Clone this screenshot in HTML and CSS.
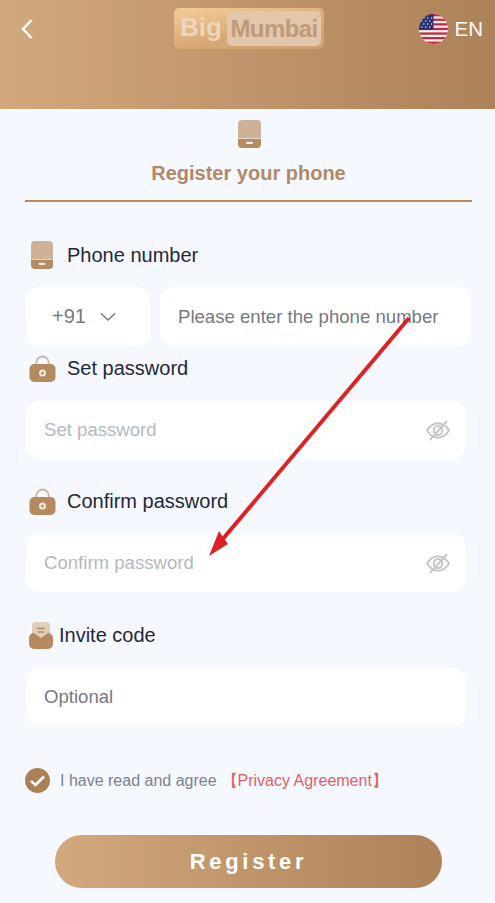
FILE: index.html
```html
<!DOCTYPE html>
<html lang="en">
<head>
<meta charset="utf-8">
<title>Register</title>
<link rel="stylesheet" href="styles.css">
</head>
<body>
<div class="page">
  <header class="header">
    <svg class="back" width="14" height="22" viewBox="0 0 14 22"><path d="M11.500 2 3 11l8.500 9" fill="none" stroke="#fff" stroke-width="2.400"/></svg>
    <div class="logo">
      <span class="logo-big">Big</span>
      <span class="logo-mumbai">Mumbai</span>
    </div>
    <div class="lang">
      <svg class="flag" width="29" height="30" viewBox="0 0 30 30" preserveAspectRatio="none">
        <defs><clipPath id="c"><circle cx="15" cy="15" r="15"/></clipPath></defs>
        <g clip-path="url(#c)">
          <rect width="30" height="30" fill="#f4f2f4"/>
          <rect y="0" width="30" height="2.400" fill="#c8283c"/>
          <rect y="4.600" width="30" height="2.300" fill="#c8283c"/>
          <rect y="9.200" width="30" height="2.300" fill="#c8283c"/>
          <rect y="13.800" width="30" height="2.300" fill="#c8283c"/>
          <rect y="18.400" width="30" height="2.300" fill="#c8283c"/>
          <rect y="23" width="30" height="2.300" fill="#c8283c"/>
          <rect y="27.600" width="30" height="2.400" fill="#c8283c"/>
          <rect width="15" height="16" fill="#27346f"/>
          <g fill="#e8ecf6">
            <circle cx="5" cy="4" r=".7"/><circle cx="9" cy="4" r=".7"/><circle cx="13" cy="4" r=".7"/>
            <circle cx="3" cy="7" r=".7"/><circle cx="7" cy="7" r=".7"/><circle cx="11" cy="7" r=".7"/>
            <circle cx="5" cy="10" r=".7"/><circle cx="9" cy="10" r=".7"/><circle cx="13" cy="10" r=".7"/>
            <circle cx="3" cy="13" r=".7"/><circle cx="7" cy="13" r=".7"/><circle cx="11" cy="13" r=".7"/>
          </g>
        </g>
      </svg>
      <span class="lang-text">EN</span>
    </div>
  </header>

  <main class="main">
    <div class="tab">
      <svg class="tab-icon" width="23" height="28" viewBox="0 0 23 28"><path d="M4 0h15a4 4 0 0 1 4 4v14.500H0V4a4 4 0 0 1 4-4z" fill="#cdb297"/><path d="M0 19h23v5a4 4 0 0 1-4 4H4a4 4 0 0 1-4-4z" fill="#b58a5f"/><rect x="8" y="21.800" width="7" height="2.200" rx="1" fill="#f7f0e8"/></svg>
      <div class="tab-title">Register your phone</div>
    </div>

    <form class="form">
      <div class="field field-phone">
        <div class="label label-phone">
          <svg width="22" height="28" viewBox="0 0 23 28" preserveAspectRatio="none"><path d="M4 0h15a4 4 0 0 1 4 4v14.500H0V4a4 4 0 0 1 4-4z" fill="#cdb297"/><path d="M0 19h23v5a4 4 0 0 1-4 4H4a4 4 0 0 1-4-4z" fill="#b58a5f"/><rect x="8" y="21.800" width="7" height="2.200" rx="1" fill="#f7f0e8"/></svg>
          <span>Phone number</span>
        </div>
        <div class="phone-row">
          <div class="box code">
            <span>+91</span>
            <svg width="16" height="10" viewBox="0 0 16 10"><path d="M1 1.500 8 8l7-6.500" fill="none" stroke="#76797f" stroke-width="1.500"/></svg>
          </div>
          <div class="box phone-input"><span class="ph-dark">Please enter the phone number</span></div>
        </div>
      </div>

      <div class="field field-set">
        <div class="label label-lock">
          <svg width="27" height="27" viewBox="0 0 28 27" preserveAspectRatio="none"><path d="M7.500 12V8a6.500 6.500 0 0 1 13 0v4" fill="none" stroke="#cdb6a0" stroke-width="1.800"/><rect x="0.500" y="9" width="27" height="18" rx="5" fill="#b58a5f"/><circle cx="14" cy="18" r="3.600" fill="#f3ebe2"/><circle cx="14" cy="18" r="1.500" fill="#b58a5f"/></svg>
          <span>Set password</span>
        </div>
        <div class="box pw"><span class="ph-light">Set password</span>
          <svg class="eye" width="24" height="21" viewBox="0 0 24 20" preserveAspectRatio="none"><path d="M1 10c3-4.500 6.500-6.800 11-6.800S20 5.500 23 10c-3 4.500-6.500 6.800-11 6.800S4 14.500 1 10z" fill="none" stroke="#c4c7c9" stroke-width="1.900"/><circle cx="12" cy="10" r="4.300" fill="none" stroke="#c4c7c9" stroke-width="1.900"/><path d="M4 19 21 1" stroke="#c4c7c9" stroke-width="1.900"/></svg>
        </div>
      </div>

      <div class="field field-confirm">
        <div class="label label-lock">
          <svg width="27" height="27" viewBox="0 0 28 27" preserveAspectRatio="none"><path d="M7.500 12V8a6.500 6.500 0 0 1 13 0v4" fill="none" stroke="#cdb6a0" stroke-width="1.800"/><rect x="0.500" y="9" width="27" height="18" rx="5" fill="#b58a5f"/><circle cx="14" cy="18" r="3.600" fill="#f3ebe2"/><circle cx="14" cy="18" r="1.500" fill="#b58a5f"/></svg>
          <span>Confirm password</span>
        </div>
        <div class="box pw"><span class="ph-light">Confirm password</span>
          <svg class="eye" width="24" height="21" viewBox="0 0 24 20" preserveAspectRatio="none"><path d="M1 10c3-4.500 6.500-6.800 11-6.800S20 5.500 23 10c-3 4.500-6.500 6.800-11 6.800S4 14.500 1 10z" fill="none" stroke="#c4c7c9" stroke-width="1.900"/><circle cx="12" cy="10" r="4.300" fill="none" stroke="#c4c7c9" stroke-width="1.900"/><path d="M4 19 21 1" stroke="#c4c7c9" stroke-width="1.900"/></svg>
        </div>
      </div>

      <div class="field field-invite">
        <div class="label label-invite">
          <svg width="24" height="27" viewBox="0 0 24 27"><rect x="3" y="0" width="18" height="20" rx="3.500" fill="#e0cdbb"/><path d="M8 6.500h8M9 10h6" stroke="#b58a5f" stroke-width="1.400"/><path d="M0 16a5 5 0 0 1 5-5l7 5 7-5a5 5 0 0 1 5 5v6a5 5 0 0 1-5 5H5a5 5 0 0 1-5-5z" fill="#b58a5f"/></svg>
          <span>Invite code</span>
        </div>
        <div class="box pw"><span class="ph-dark">Optional</span></div>
      </div>

      <div class="agree">
        <svg width="25" height="25" viewBox="0 0 25 25"><circle cx="12.500" cy="12.500" r="12.500" fill="#ac8056"/><path d="M6 13l4.500 4L19 8.500" fill="none" stroke="#fff" stroke-width="2.600"/></svg>
        <span class="agree-text">I have read and agree</span>
        <span class="agree-link">【Privacy Agreement】</span>
      </div>

      <div class="btn-wrap"><button class="btn" type="button">Register</button></div>
    </form>
  </main>

  <svg class="arrow" width="495" height="903" viewBox="0 0 495 903"><path d="M409 318 222 540" stroke="#dc2224" stroke-width="4" fill="none"/><path d="M209 556 219 531 228 544z" fill="#dc2224"/></svg>
</div>
</body>
</html>
```

FILE: styles.css
```css
* { box-sizing: border-box; }
html, body { margin: 0; padding: 0; }
body {
  font-family: "Liberation Sans", Arial, sans-serif;
  background: #f6f8ff;
  color: #1f2937;
}
.page { position: relative; width: 495px; height: 903px; overflow: hidden; }

.header {
  height: 109px;
  background: linear-gradient(90deg, #d2a87d 0%, #ae8258 100%);
  display: grid;
  grid-template-columns: 154px 150px 1fr;
  align-items: start;
  padding: 8px 12px 0 20px;
}
.back { margin-top: 10px; }
.logo {
  width: 150px;
  height: 41px;
  border-radius: 5px;
  background: linear-gradient(170deg, #f3cd98 0%, #d7a873 60%, #cfa273 100%);
  display: flex;
  align-items: center;
  padding: 0 3px 2px 6px;
}
.logo-big {
  width: 47px;
  font-size: 26px;
  font-weight: 700;
  color: #edd6bf;
  filter: blur(0.5px);
}
.logo-mumbai {
  width: 94px;
  height: 35px;
  margin-top: 2px;
  border-radius: 5px;
  background: #e2c7ac;
  color: #bf9a76;
  font-size: 24px;
  font-weight: 700;
  display: flex;
  align-items: center;
  justify-content: center;
  letter-spacing: -0.6px;
}
.lang { display: flex; align-items: center; justify-content: flex-end; gap: 7px; margin-top: 6px; }
.lang-text { color: #fff; font-size: 20.5px; }

.main { padding: 11px 23px 0 25px; }
.tab { display: flex; flex-direction: column; align-items: center; height: 82px; border-bottom: 2px solid #b58a5f; }
.tab-icon { margin-left: 1px; }
.tab-title { margin-top: 13px; font-size: 20px; line-height: 24px; font-weight: 700; color: #b08a64; }

.form { display: flex; flex-direction: column; }
.field { display: flex; flex-direction: column; padding-left: 1px; }
.label { display: flex; align-items: center; font-size: 20px; line-height: 28px; color: #1f2937; }
.field-phone { padding-top: 39px; }
.label-phone { padding-left: 5px; gap: 14px; margin-bottom: 18px; }
.field-set { padding-top: 8px; }
.field-confirm { padding-top: 28px; }
.label-lock { padding-left: 3px; gap: 11px; height: 28px; margin-bottom: 19px; }
.field-invite { padding-top: 29px; }
.label-invite { padding-left: 3px; gap: 6px; margin-bottom: 19px; }

.box {
  background: #fff;
  border-radius: 14px;
  height: 59px;
  display: flex;
  align-items: center;
  font-size: 18.6px;
}
.phone-row { display: flex; gap: 10px; }
.code { width: 124px; padding-left: 26px; gap: 14px; font-size: 20px; color: #76797f; }
.phone-input { width: 311px; padding-left: 18px; }
.pw { width: 440px; height: 58px; padding: 0 16px 0 18px; justify-content: space-between; }
.ph-dark { color: #76797f; }
.ph-light { color: #b5b9be; }
.eye { flex: none; }

.agree { display: flex; align-items: center; margin-top: 42px; height: 25px; font-size: 16px; }
.agree-text { margin-left: 10px; margin-top: 1px; color: #7c8192; }
.agree-link { margin-left: 5px; margin-top: 1px; color: #e2605f; white-space: nowrap; }

.btn-wrap { margin-top: 42px; padding-left: 30px; }
.btn {
  display: block;
  width: 387px;
  height: 53px;
  border: 0;
  border-radius: 27px;
  background: linear-gradient(90deg, #d2a87d 0%, #ae8258 100%);
  color: #fff;
  font: 700 22px "Liberation Sans", Arial, sans-serif;
  letter-spacing: 3.7px;
}

.arrow { position: absolute; left: 0; top: 0; pointer-events: none; }
```
